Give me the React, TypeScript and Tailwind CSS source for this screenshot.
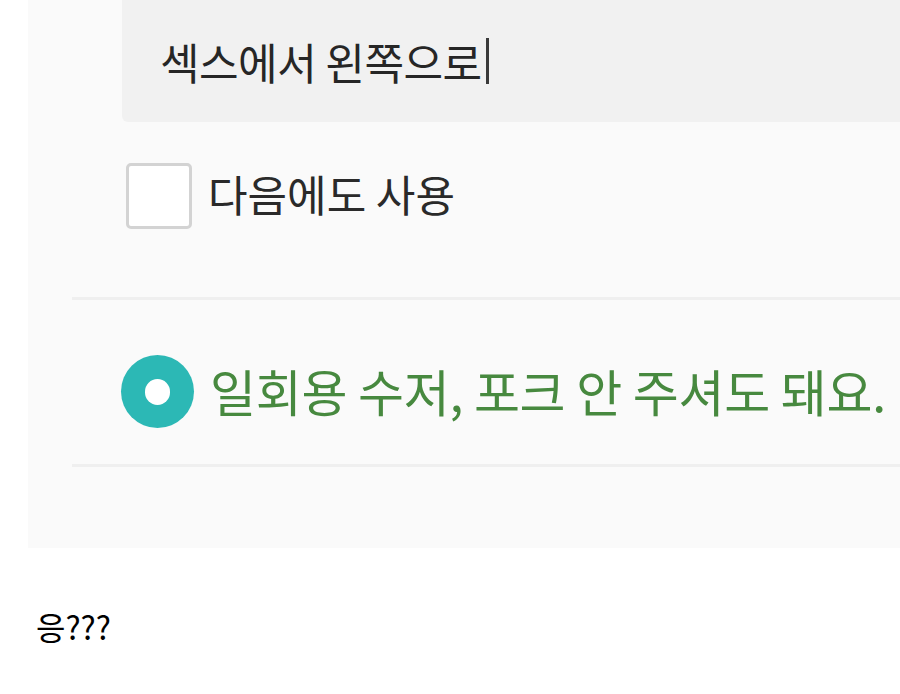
import React from "react";

const font = { fontFamily: '"Noto Sans CJK KR", "Noto Sans", sans-serif' };

export default function App() {
  return (
    <div className="w-[900px] h-[694px] bg-white overflow-hidden" style={font}>
      {/* captured screenshot */}
      <div className="ml-[28px] w-[872px] h-[548px] bg-[#fafafa] flex flex-col">
        {/* request memo input */}
        <div className="ml-[94px] h-[122px] bg-[#f1f1f1] rounded-bl-[6px] flex items-center pl-[38px]">
          <span className="text-[43px] text-[#262626] tracking-[-0.5px] leading-none">
            섹스에서 왼쪽으로
          </span>
          <span className="ml-[4px] w-[3px] h-[46px] bg-[#3a3a3a]" />
        </div>

        {/* save for next time */}
        <div className="mt-[41px] ml-[98px] flex items-center gap-[16px]">
          <div className="w-[66px] h-[66px] rounded-[5px] border-[3px] border-[#d3d3d3] bg-white" />
          <span className="-mt-[6px] text-[43px] text-[#2a2a2a] leading-none">다음에도 사용</span>
        </div>

        <div className="mt-[68px] ml-[44px] h-[3px] bg-[#efefef]" />

        {/* no cutlery option */}
        <div className="mt-[55px] ml-[93px] flex items-center gap-[16px]">
          <div className="w-[73px] h-[73px] rounded-full bg-[#2cb8b5] flex items-center justify-center">
            <div className="w-[25px] h-[26px] rounded-full bg-white" />
          </div>
          <span className="-mt-[4px] text-[50px] text-[#47893f] tracking-[-0.3px] leading-none">
            일회용 수저, 포크 안 주셔도 돼요.
          </span>
        </div>

        <div className="mt-[36px] ml-[44px] h-[3px] bg-[#efefef]" />
      </div>

      <div className="mt-[62px] ml-[36px] text-[32px] text-black leading-none">응???</div>
    </div>
  );
}
